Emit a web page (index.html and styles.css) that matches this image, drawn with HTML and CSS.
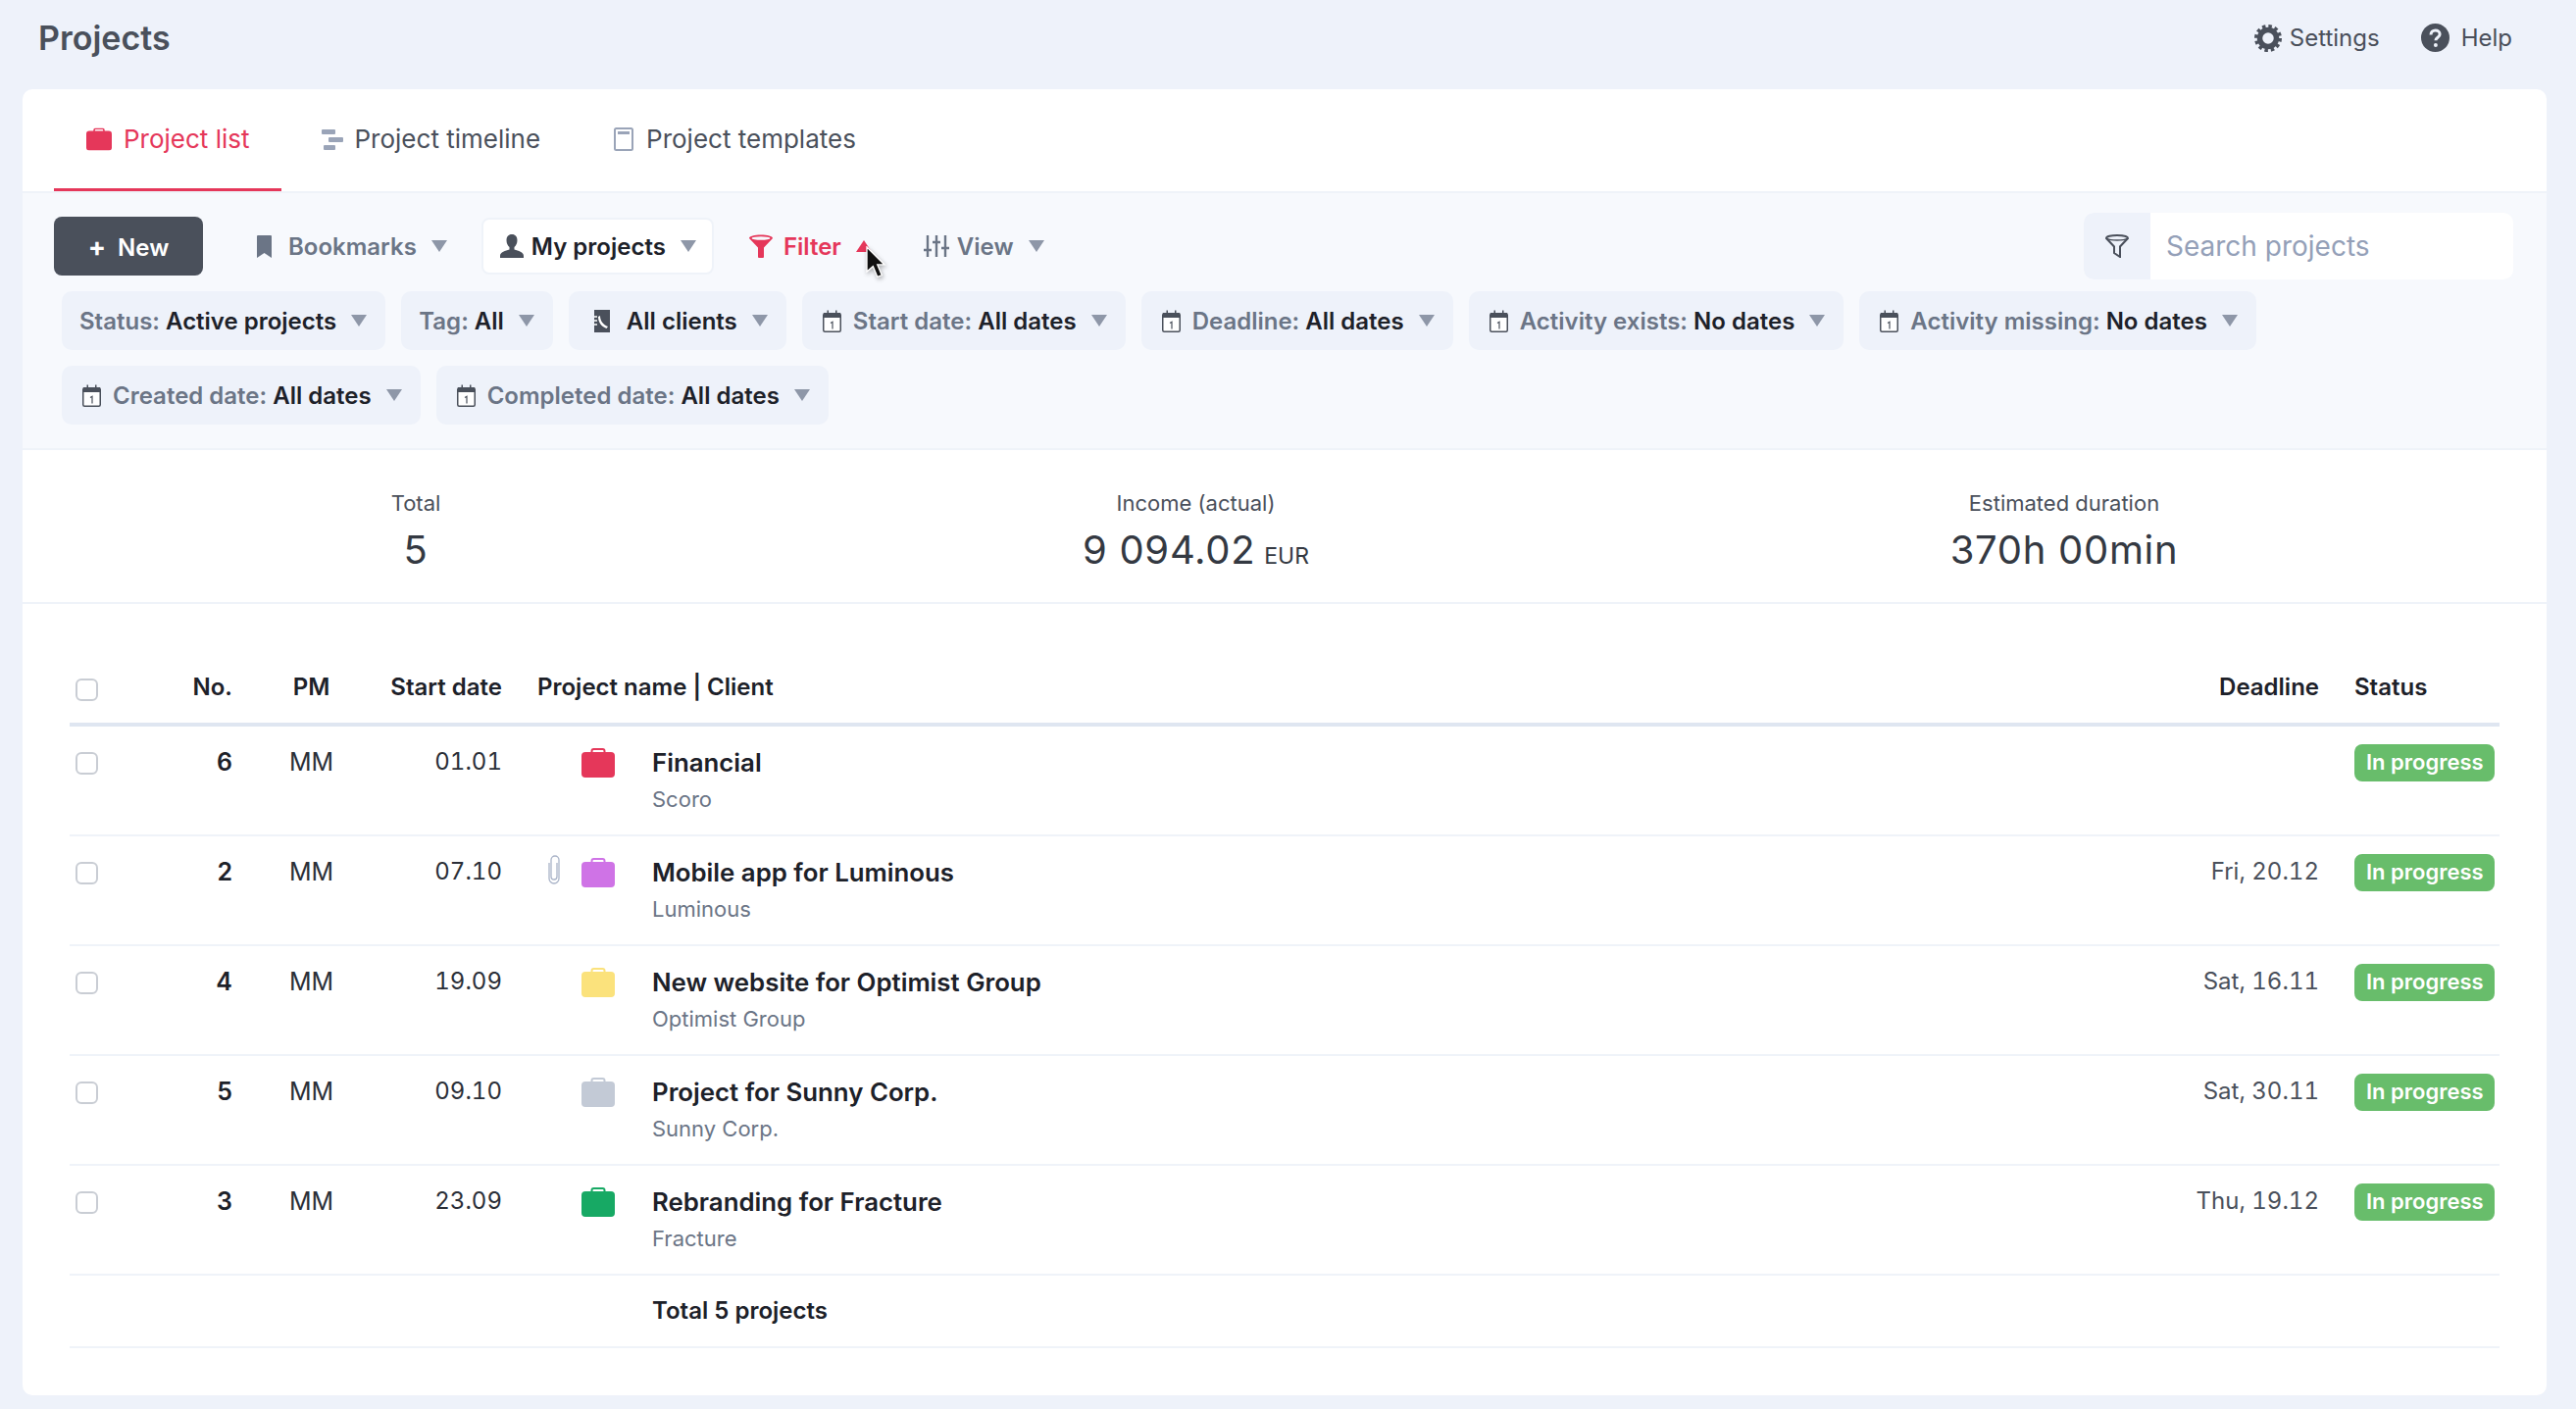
FILE: index.html
```html
<!DOCTYPE html>
<html lang="en">
<head>
  <meta charset="UTF-8" />
  <title>Projects</title>
  <link rel="stylesheet" href="styles.css">
</head>
<body>
  <svg class="defs" width="0" height="0">
    <symbol id="bag" viewBox="0 0 34 30">
      <path d="M10.500 6V3a2 2 0 0 1 2-2h9a2 2 0 0 1 2 2v3" fill="none" stroke="currentColor" stroke-width="2"/>
      <rect x="0" y="4" width="34" height="26" rx="4" fill="currentColor"/>
    </symbol>
    <symbol id="cal" viewBox="0 0 19 23">
      <rect x="0.750" y="3.750" width="17.500" height="18.500" rx="1.500" fill="#fff" stroke="#4a505b" stroke-width="1.500"/>
      <path d="M1 3h3.500V0.500h1.500V3h7V0.500h1.500V3H18v5H1z" fill="#4a505b"/>
      <path d="M8 13.500l2-1.200V19.500" fill="none" stroke="#4a505b" stroke-width="1.200"/>
    </symbol>
  </svg>

  <header class="topbar">
    <h1>Projects</h1>
    <nav class="toplinks">
      <a class="toplink">
        <svg class="gear" viewBox="0 0 28 28"><g fill="none" stroke="#4a505b"><circle cx="14" cy="14" r="8.500" stroke-width="5.500"/><circle cx="14" cy="14" r="12" stroke-width="4" stroke-dasharray="3.400 2.883"/></g></svg>
        Settings
      </a>
      <a class="toplink">
        <svg class="help" viewBox="0 0 29 29"><circle cx="14.500" cy="14.500" r="14.500" fill="#4a505b"/><path d="M10 11.500c0-2.800 2-4.500 4.600-4.500s4.500 1.600 4.500 3.900c0 3.300-4.200 3.400-4.200 6.300" fill="none" stroke="#eef2fa" stroke-width="3"/><circle cx="14.900" cy="22" r="2" fill="#eef2fa"/></svg>
        Help
      </a>
    </nav>
  </header>

  <main class="card">
    <div class="tabs">
      <a class="tab active">
        <svg class="tab-icon bag-red" viewBox="0 0 34 30"><use href="#bag"/></svg>
        Project list
      </a>
      <a class="tab">
        <svg class="tab-icon" viewBox="0 0 22 22"><g fill="#9aa4b8"><rect x="0" y="1" width="14" height="5" rx="1"/><rect x="7" y="9" width="15" height="5" rx="1"/><rect x="2" y="17" width="12" height="5" rx="1"/></g></svg>
        Project timeline
      </a>
      <a class="tab">
        <svg class="tab-icon" viewBox="0 0 20 24"><rect x="1" y="1" width="18" height="22" rx="1.500" fill="none" stroke="#9aa4b8" stroke-width="2"/><rect x="4" y="4" width="12" height="3" fill="#9aa4b8"/></svg>
        Project templates
      </a>
    </div>

    <section class="toolbar">
      <div class="toolbar-top">
        <div class="actions">
          <button class="btn-new"><span class="plus">+</span> New</button>
          <a class="action bookmarks">
            <svg class="ic-book" viewBox="0 0 15 23"><path d="M0 1a1 1 0 0 1 1-1h13a1 1 0 0 1 1 1v22l-7.500-5L0 23z" fill="#6b7586"/></svg>
            Bookmarks<i class="caret"></i>
          </a>
          <a class="action mine">
            <svg class="ic-person" viewBox="0 0 24 24"><path d="M12 0c3.600 0 5.500 2.500 5.500 6 0 3-1.200 5.500-3 7v2.500c4 1 9.500 2.500 9.500 6.500v2H0v-2c0-4 5.500-5.500 9.500-6.500V13c-1.800-1.500-3-4-3-7 0-3.500 1.900-6 5.500-6z" fill="#4a505b"/></svg>
            My projects<i class="caret"></i>
          </a>
          <a class="action filter">
            <svg class="ic-funnel" viewBox="0 0 26 24"><path d="M1 4c0-2 5.500-3.500 12-3.500S25 2 25 4l-9 9.500V23a1 1 0 0 1-1 1h-4a1 1 0 0 1-1-1v-9.500z" fill="#e5375a"/><ellipse cx="13" cy="4" rx="9.500" ry="1.800" fill="#f7f9fd"/></svg>
            Filter<i class="caret up"></i>
          </a>
          <a class="action view">
            <svg class="ic-view" viewBox="0 0 26 22"><g fill="none" stroke="#6b7586" stroke-width="2.400"><path d="M4 0v22M13 0v22M22 0v22"/><path d="M0 15h8M9 7h8M18 13h8"/></g></svg>
            View<i class="caret"></i>
          </a>
        </div>
        <div class="search">
          <span class="search-filter">
            <svg class="ic-outline" viewBox="0 0 24 24"><path d="M1 4c0-1.800 5-3 11-3s11 1.200 11 3l-8 8.500V23l-6-4v-6.500z" fill="none" stroke="#4a505b" stroke-width="2"/><path d="M2 4.500c3 2 17 2 20 0" fill="none" stroke="#4a505b" stroke-width="1.500"/></svg>
          </span>
          <span class="search-text">Search projects</span>
        </div>
      </div>

      <div class="chips">
        <a class="chip">Status: <b>Active projects</b><i class="caret"></i></a>
        <a class="chip">Tag: <b>All</b><i class="caret"></i></a>
        <a class="chip">
          <svg class="ic-client" viewBox="0 0 16 23"><rect width="16" height="23" fill="#4a505b"/><path d="M6 6c0 5 3 9 8 11l-1.500 2C7 17 4 12 4 7z" fill="#fff"/><path d="M0 7h3M0 11h3M0 15h3" stroke="#fff" stroke-width="1.500"/></svg>
          <b>All clients</b><i class="caret"></i>
        </a>
        <a class="chip"><svg class="ic-cal"><use href="#cal"/></svg>Start date: <b>All dates</b><i class="caret"></i></a>
        <a class="chip"><svg class="ic-cal"><use href="#cal"/></svg>Deadline: <b>All dates</b><i class="caret"></i></a>
        <a class="chip"><svg class="ic-cal"><use href="#cal"/></svg>Activity exists: <b>No dates</b><i class="caret"></i></a>
        <a class="chip"><svg class="ic-cal"><use href="#cal"/></svg>Activity missing: <b>No dates</b><i class="caret"></i></a>
        <a class="chip"><svg class="ic-cal"><use href="#cal"/></svg>Created date: <b>All dates</b><i class="caret"></i></a>
        <a class="chip"><svg class="ic-cal"><use href="#cal"/></svg>Completed date: <b>All dates</b><i class="caret"></i></a>
      </div>
    </section>

    <section class="stats">
      <div class="stat">
        <div class="stat-label">Total</div>
        <div class="stat-value">5</div>
      </div>
      <div class="stat income">
        <div class="stat-label">Income (actual)</div>
        <div class="stat-value">9 094.02 <small>EUR</small></div>
      </div>
      <div class="stat">
        <div class="stat-label">Estimated duration</div>
        <div class="stat-value">370h 00min</div>
      </div>
    </section>

    <table class="projects">
      <colgroup>
        <col class="c-check"><col class="c-no"><col class="c-pm"><col class="c-start"><col><col class="c-deadline"><col class="c-status">
      </colgroup>
      <thead>
        <tr>
          <th><span class="check"></span></th>
          <th class="right">No.</th>
          <th class="center">PM</th>
          <th class="right">Start date</th>
          <th class="name-head">Project name | Client</th>
          <th class="right">Deadline</th>
          <th class="status-head">Status</th>
        </tr>
      </thead>
      <tbody>
        <tr>
          <td><span class="check"></span></td>
          <td class="right num">6</td>
          <td class="center">MM</td>
          <td class="right date">01.01</td>
          <td><div class="project"><span class="clip"></span><svg class="bag" style="color:#e5375a" viewBox="0 0 34 30"><use href="#bag"/></svg><div><div class="pname">Financial</div><div class="client">Scoro</div></div></div></td>
          <td class="right date deadline"></td>
          <td class="status-cell"><span class="badge">In progress</span></td>
        </tr>
        <tr>
          <td><span class="check"></span></td>
          <td class="right num">2</td>
          <td class="center">MM</td>
          <td class="right date">07.10</td>
          <td><div class="project"><span class="clip"><svg viewBox="0 0 12 30"><path d="M9 8v14a3 3 0 0 1-6 0V5a4 4 0 0 1 4-4 4 4 0 0 1 4 4v19a5 5 0 0 1-5 5 5 5 0 0 1-5-5V8" fill="none" stroke="#aab4c8" stroke-width="1.300"/></svg></span><svg class="bag" style="color:#cf73e6" viewBox="0 0 34 30"><use href="#bag"/></svg><div><div class="pname">Mobile app for Luminous</div><div class="client">Luminous</div></div></div></td>
          <td class="right date deadline">Fri, 20.12</td>
          <td class="status-cell"><span class="badge">In progress</span></td>
        </tr>
        <tr>
          <td><span class="check"></span></td>
          <td class="right num">4</td>
          <td class="center">MM</td>
          <td class="right date">19.09</td>
          <td><div class="project"><span class="clip"></span><svg class="bag" style="color:#fbe27c" viewBox="0 0 34 30"><use href="#bag"/></svg><div><div class="pname">New website for Optimist Group</div><div class="client">Optimist Group</div></div></div></td>
          <td class="right date deadline">Sat, 16.11</td>
          <td class="status-cell"><span class="badge">In progress</span></td>
        </tr>
        <tr>
          <td><span class="check"></span></td>
          <td class="right num">5</td>
          <td class="center">MM</td>
          <td class="right date">09.10</td>
          <td><div class="project"><span class="clip"></span><svg class="bag" style="color:#c3cad6" viewBox="0 0 34 30"><use href="#bag"/></svg><div><div class="pname">Project for Sunny Corp.</div><div class="client">Sunny Corp.</div></div></div></td>
          <td class="right date deadline">Sat, 30.11</td>
          <td class="status-cell"><span class="badge">In progress</span></td>
        </tr>
        <tr>
          <td><span class="check"></span></td>
          <td class="right num">3</td>
          <td class="center">MM</td>
          <td class="right date">23.09</td>
          <td><div class="project"><span class="clip"></span><svg class="bag" style="color:#17a964" viewBox="0 0 34 30"><use href="#bag"/></svg><div><div class="pname">Rebranding for Fracture</div><div class="client">Fracture</div></div></div></td>
          <td class="right date deadline">Thu, 19.12</td>
          <td class="status-cell"><span class="badge">In progress</span></td>
        </tr>
      </tbody>
      <tfoot>
        <tr>
          <td colspan="4"></td>
          <td class="total" colspan="3">Total 5 projects</td>
        </tr>
      </tfoot>
    </table>
  </main>

  <svg class="cursor" viewBox="0 0 24 40"><path d="M2 1v28l7-6 5 12 5-2-5-12h8z" fill="#111" stroke="#fff" stroke-width="1.500"/></svg>
</body>
</html>
```

FILE: styles.css
```css
:root {
  --page: #eef2fa;
  --panel: #f7f9fd;
  --line: #eff3f9;
  --text: #1d2129;
  --dark: #4a505b;
  --muted: #6b7586;
  --caret: #8e97a8;
  --red: #e5375a;
}

* {
  box-sizing: border-box;
}

body {
  margin: 0;
  padding: 0 30px 14px 23px;
  background: var(--page);
  font-family: Inter, 'Noto Sans', sans-serif;
  color: var(--text);
  position: relative;
}

.defs {
  position: absolute;
}

.topbar {
  height: 91px;
  display: flex;
  align-items: center;
  justify-content: space-between;
  padding: 0 35px 14px 16px;
}

.topbar h1 {
  margin: 0;
  font-size: 34px;
  font-weight: 600;
  color: var(--dark);
}

.toplinks {
  display: flex;
  gap: 42px;
}

.toplink {
  display: flex;
  align-items: center;
  gap: 8px;
  font-size: 24px;
  color: var(--dark);
}

.gear {
  width: 28px;
  height: 28px;
}

.help {
  width: 29px;
  height: 29px;
  margin-right: 4px;
}

.card {
  background: #fff;
  border-radius: 10px;
  overflow: hidden;
  height: 1332px;
}

.tabs {
  display: flex;
  gap: 8px;
  height: 104px;
  padding: 0 32px;
}

.tab {
  display: flex;
  align-items: center;
  gap: 12px;
  padding: 0 33px 3px;
  font-size: 26px;
  color: var(--dark);
}

.tab.active {
  padding-right: 32px;
  color: var(--red);
  box-shadow: inset 0 -3px 0 var(--red);
}

.tab-icon {
  width: 22px;
  height: 24px;
}

.bag-red {
  width: 26px;
  color: var(--red);
}

.toolbar {
  background: var(--panel);
  border-top: 2px solid var(--line);
  border-bottom: 2px solid var(--line);
  padding: 20px 34px 24px 32px;
}

.toolbar-top {
  display: flex;
  justify-content: space-between;
  height: 68px;
  margin-bottom: 12px;
}

.actions {
  display: flex;
  align-items: center;
}

.btn-new {
  width: 152px;
  height: 60px;
  border: none;
  border-radius: 8px;
  background: var(--dark);
  color: #fff;
  font: 600 24px Inter, sans-serif;
}

.plus {
  font-size: 27px;
  font-weight: 700;
  margin-right: 6px;
}

.action {
  display: flex;
  align-items: center;
  font-size: 24px;
  font-weight: 600;
  height: 58px;
  color: var(--muted);
}

.caret {
  display: inline-block;
  margin-left: 15px;
  border-left: 8px solid transparent;
  border-right: 8px solid transparent;
  border-top: 12px solid var(--caret);
}

.caret.up {
  border-top: none;
  border-bottom: 12px solid var(--red);
}

.bookmarks {
  margin-left: 55px;
}

.ic-book {
  width: 15px;
  height: 23px;
  margin-right: 17px;
}

.mine {
  margin-left: 35px;
  padding: 0 16px 0 17px;
  background: #fff;
  border: 2px solid var(--line);
  border-radius: 8px;
  color: var(--text);
}

.ic-person {
  width: 24px;
  height: 24px;
  margin-right: 8px;
}

.filter {
  margin-left: 35px;
  color: var(--red);
}

.ic-funnel {
  width: 26px;
  height: 24px;
  margin-right: 10px;
}

.view {
  margin-left: 53px;
}

.ic-view {
  width: 26px;
  height: 22px;
  margin-right: 8px;
}

.search {
  display: flex;
  width: 438px;
  height: 68px;
  border-radius: 10px;
  overflow: hidden;
  background: #fff;
}

.search-filter {
  width: 68px;
  display: flex;
  align-items: center;
  justify-content: center;
  background: var(--page);
}

.ic-outline {
  width: 24px;
  height: 24px;
}

.search-text {
  align-self: center;
  margin-left: 16px;
  font-size: 28px;
  color: #94a0b8;
}

.chips {
  display: flex;
  flex-wrap: wrap;
  gap: 16px;
  padding-left: 8px;
}

.chip {
  display: flex;
  align-items: center;
  height: 60px;
  padding: 0 19px 0 18px;
  border-radius: 10px;
  background: var(--page);
  font-size: 24px;
  font-weight: 600;
  color: var(--muted);
  white-space: pre;
}

.chip b {
  font-weight: 600;
  color: var(--text);
}

.ic-cal {
  width: 19px;
  height: 23px;
  margin: 0 12px 0 3px;
}

.ic-client {
  width: 16px;
  height: 23px;
  margin: 0 17px 0 8px;
}

.stats {
  display: grid;
  grid-template-columns: 802px 798px 964px;
  height: 157px;
  border-bottom: 2px solid var(--line);
  text-align: center;
}

.income {
  padding-right: 9px;
}

.stat-label {
  margin-top: 39px;
  font-size: 22px;
  line-height: 30px;
  color: var(--dark);
}

.stat-value {
  margin-top: 6px;
  font-size: 40px;
  line-height: 54px;
  color: #343942;
  letter-spacing: 0.7px;
}

.stat-value small {
  margin-left: -3px;
  font-size: 23px;
  letter-spacing: 0;
}

.projects {
  width: 2478px;
  margin-left: 48px;
  border-collapse: separate;
  border-spacing: 0;
  table-layout: fixed;
  font-size: 25px;
}

.c-check { width: 59px; }
.c-no { width: 116px; }
.c-pm { width: 143px; }
.c-start { width: 132px; }
.c-deadline { width: 174px; }
.c-status { width: 175px; }

.projects th {
  height: 125px;
  padding: 48px 9px 0 0;
  border-bottom: 4px solid #dfe6f1;
  font-size: 24px;
  font-weight: 600;
  text-align: left;
  vertical-align: middle;
}

.projects td {
  height: 112px;
  padding: 19px 9px 0 0;
  vertical-align: top;
  border-bottom: 2px solid var(--line);
  color: #2b2f38;
  line-height: 34px;
}

.projects th.right,
.projects td.right {
  text-align: right;
}

.projects th.center,
.projects td.center {
  text-align: center;
  padding-right: 0;
}

.projects td.num {
  font-weight: 600;
  color: var(--text);
}

.projects td.date {
  font-size: 24px;
  font-variant-numeric: tabular-nums;
}

.projects td.deadline {
  color: var(--dark);
}

.projects th.name-head {
  padding-left: 27px;
}

.projects th.status-head,
.projects td.status-cell {
  padding-left: 27px;
  padding-right: 0;
}

.check {
  display: block;
  width: 23px;
  height: 23px;
  margin: 5px 0 0 6px;
  border: 2px solid #c9cdd4;
  border-radius: 6px;
  background: #fff;
}

.projects td .check {
  margin-top: 7px;
}

.project {
  display: flex;
  padding-left: 38px;
}

.clip {
  width: 12px;
  height: 30px;
  margin: 0 22px 0 0;
}

.clip svg {
  display: block;
  width: 12px;
  height: 30px;
}

.bag {
  width: 34px;
  height: 30px;
  margin: 3px 38px 0 0;
}

.pname {
  font-size: 25.800px;
  font-weight: 600;
  line-height: 34px;
  margin-top: 1px;
  color: var(--text);
}

.client {
  margin-top: 5px;
  font-size: 22px;
  line-height: 30px;
  color: var(--muted);
}

.badge {
  display: block;
  width: fit-content;
  height: 38px;
  margin-top: -1px;
  padding: 0 11px 0 12px;
  border-radius: 8px;
  background: #68bd6b;
  color: #fff;
  font-size: 22px;
  font-weight: 600;
  line-height: 36px;
  white-space: nowrap;
}

.projects tfoot td {
  height: 74px;
}

.projects td.total {
  padding: 0 0 0 144px;
  vertical-align: middle;
  font-size: 24px;
  font-weight: 600;
  color: var(--text);
}

.cursor {
  position: absolute;
  left: 882px;
  top: 251px;
  width: 22px;
  height: 36px;
  filter: drop-shadow(1px 2px 2px rgba(0, 0, 0, 0.3));
}
```
